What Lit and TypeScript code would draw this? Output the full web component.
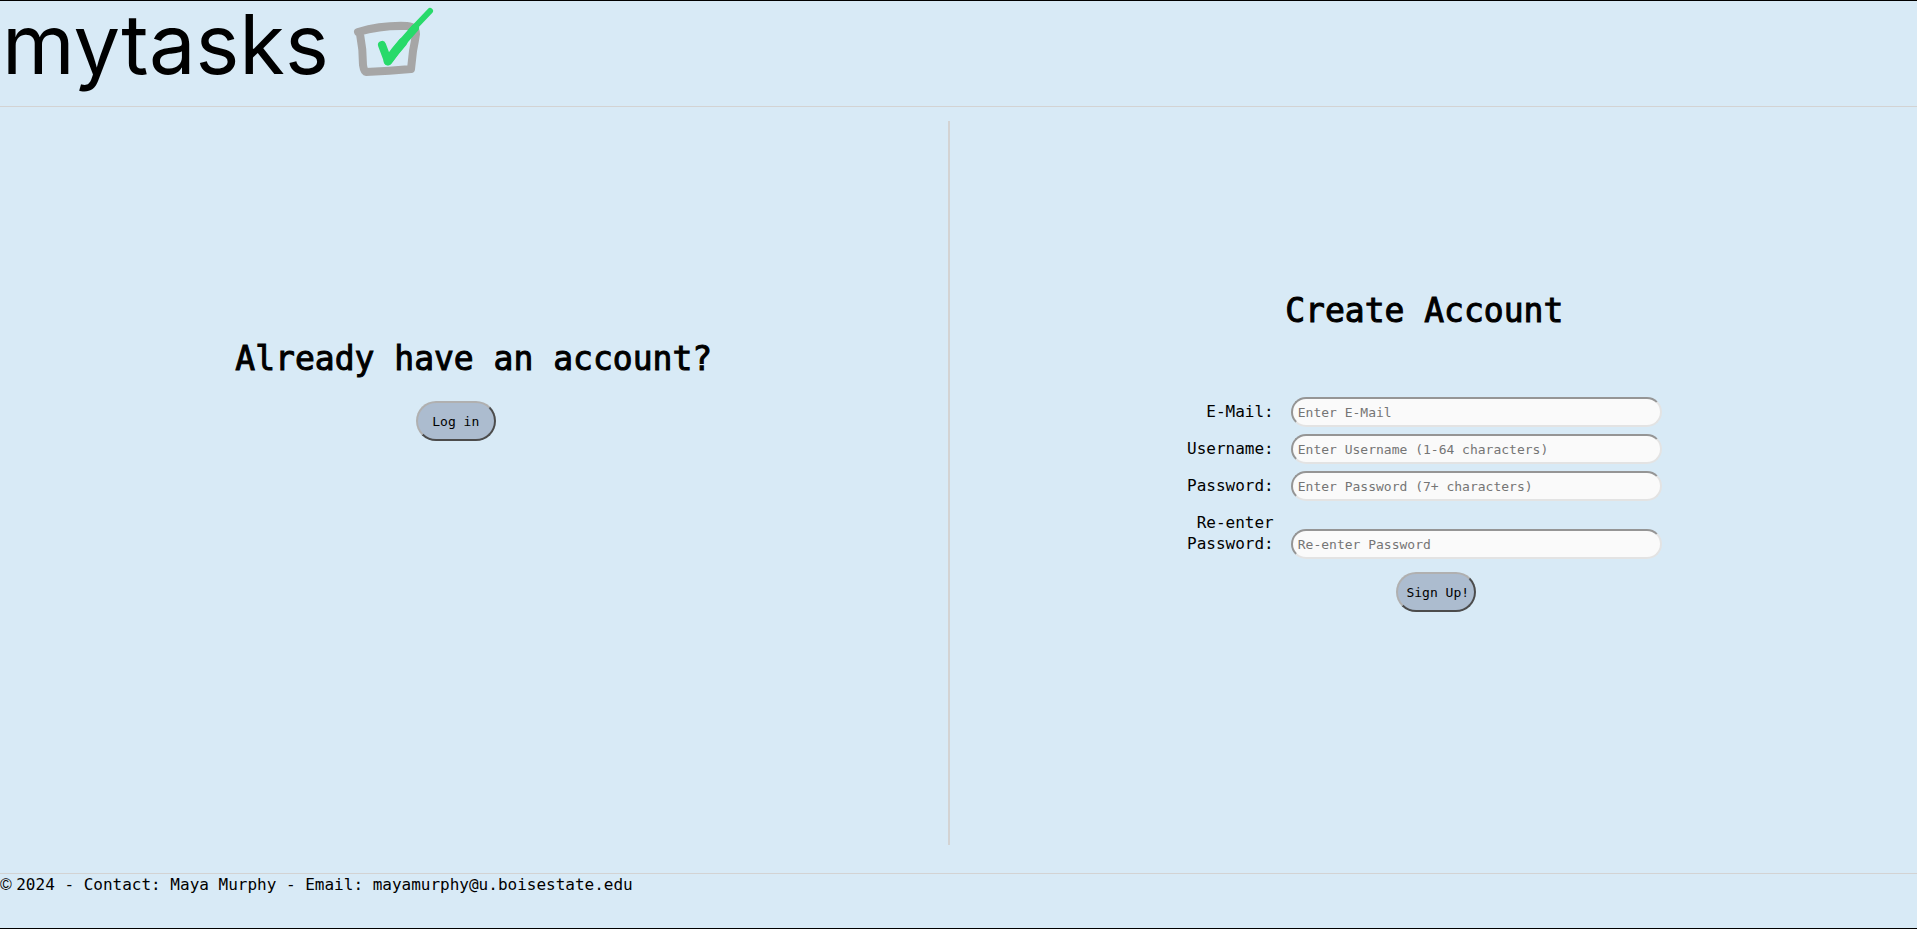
import { LitElement, html, css } from "lit";
import { customElement } from "lit/decorators.js";

interface Field {
  id: string;
  label: string;
  type: string;
  placeholder: string;
}

const FIELDS: Field[] = [
  { id: "email", label: "E-Mail:", type: "email", placeholder: "Enter E-Mail" },
  { id: "username", label: "Username:", type: "text", placeholder: "Enter Username (1-64 characters)" },
  { id: "password", label: "Password:", type: "password", placeholder: "Enter Password (7+ characters)" },
  { id: "confirm", label: "Re-enter Password:", type: "password", placeholder: "Re-enter Password" },
];

@customElement("app-root")
export class AppRoot extends LitElement {
  static styles = css`
    :host {
      display: flex;
      flex-direction: column;
      box-sizing: border-box;
      min-height: 100vh;
      border-top: 1px solid #000;
      border-bottom: 1px solid #000;
      background: #d8eaf6;
      color: #000;
      font-family: "DejaVu Sans Mono", "Liberation Mono", monospace;
      font-size: 16px;
      line-height: 21px;
    }
    .header {
      display: flex;
      align-items: flex-start;
      gap: 22px;
      height: 105px;
      padding-left: 2px;
      border-bottom: 1px solid #d3d3d3;
    }
    .brand {
      font-family: Inter, "Liberation Sans", sans-serif;
      font-size: 83px;
      line-height: 87px;
    }
    .logo {
      width: 84px;
      height: 80px;
    }
    .main {
      display: flex;
      flex: 1;
      padding: 14px 0 28px;
    }
    .panel {
      display: flex;
      flex-direction: column;
      align-items: center;
      box-sizing: border-box;
    }
    .login {
      width: calc(50% - 11px);
      padding-top: 218px;
    }
    .signup {
      flex: 1;
      padding-top: 170px;
      padding-right: 18px;
      border-left: 2px solid #d3d3d3;
    }
    .title {
      margin: 0;
      font-size: 33px;
      font-weight: 400;
      line-height: 40px;
      -webkit-text-stroke: 1px #000;
    }
    .button {
      box-sizing: border-box;
      width: 80px;
      height: 40px;
      padding: 0;
      border: 2px solid;
      border-color: #b0b0b0 #4c4c4c #4c4c4c #b0b0b0;
      border-radius: 20px;
      background: #acbccf;
      color: #000;
      font-family: inherit;
      font-size: 13px;
    }
    .login .button {
      margin: 22px 36px 0 0;
    }
    .form {
      display: grid;
      grid-template-columns: 87px 371px;
      gap: 7px 17px;
      align-items: end;
      margin-top: 66px;
    }
    .label {
      padding: 4px 0 5px;
      text-align: right;
    }
    .input {
      box-sizing: border-box;
      width: 100%;
      height: 30px;
      padding: 0 5px;
      border: 2px solid;
      border-color: #959595 #e3e3e3 #e3e3e3 #959595;
      border-radius: 16px;
      background: #fafafa;
      color: #000;
      font-family: inherit;
      font-size: 13px;
    }
    .input::placeholder {
      color: #757575;
    }
    .form .button {
      grid-column: 1 / -1;
      justify-self: center;
      margin: 6px 0 0 24px;
      padding-left: 3px;
    }
    .footer {
      height: 54px;
      border-top: 1px solid #d3d3d3;
    }
    .copyright {
      font-family: "Liberation Sans", sans-serif;
    }
  `;

  render() {
    return html`
      <header class="header">
        <span class="brand">mytasks</span>
        <svg class="logo" viewBox="0 0 84 80" aria-hidden="true" fill="none" stroke-linecap="round" stroke-linejoin="round">
          <path stroke="#a6a6a6" stroke-width="8" d="M7 31 Q31 24 56 25 Q65 26 65 33 Q64 40 62 50 L60 68 Q39 70 15 71 Q13 71 12 64 Q12 48 9 33" />
          <path stroke="#28da6a" stroke-width="8" d="M31 44 L37 60 Q50 42 64 27" />
          <path stroke="#28da6a" stroke-width="9" d="M37 60 Q44 50 52 41" />
          <path stroke="#28da6a" stroke-width="6" d="M60 30 L79 10" />
        </svg>
      </header>
      <main class="main">
        <section class="panel login">
          <h1 class="title">Already have an account?</h1>
          <button class="button" type="button">Log in</button>
        </section>
        <section class="panel signup">
          <h1 class="title">Create Account</h1>
          <form class="form">
            ${FIELDS.map(
              (f) => html`
                <label class="label" for=${f.id}>${f.label}</label>
                <input class="input" id=${f.id} name=${f.id} type=${f.type} placeholder=${f.placeholder} />
              `
            )}
            <button class="button" type="button">Sign Up!</button>
          </form>
        </section>
      </main>
      <footer class="footer">
        <span class="copyright">©&nbsp;</span>2024 - Contact: Maya Murphy - Email: mayamurphy@u.boisestate.edu
      </footer>
    `;
  }
}
